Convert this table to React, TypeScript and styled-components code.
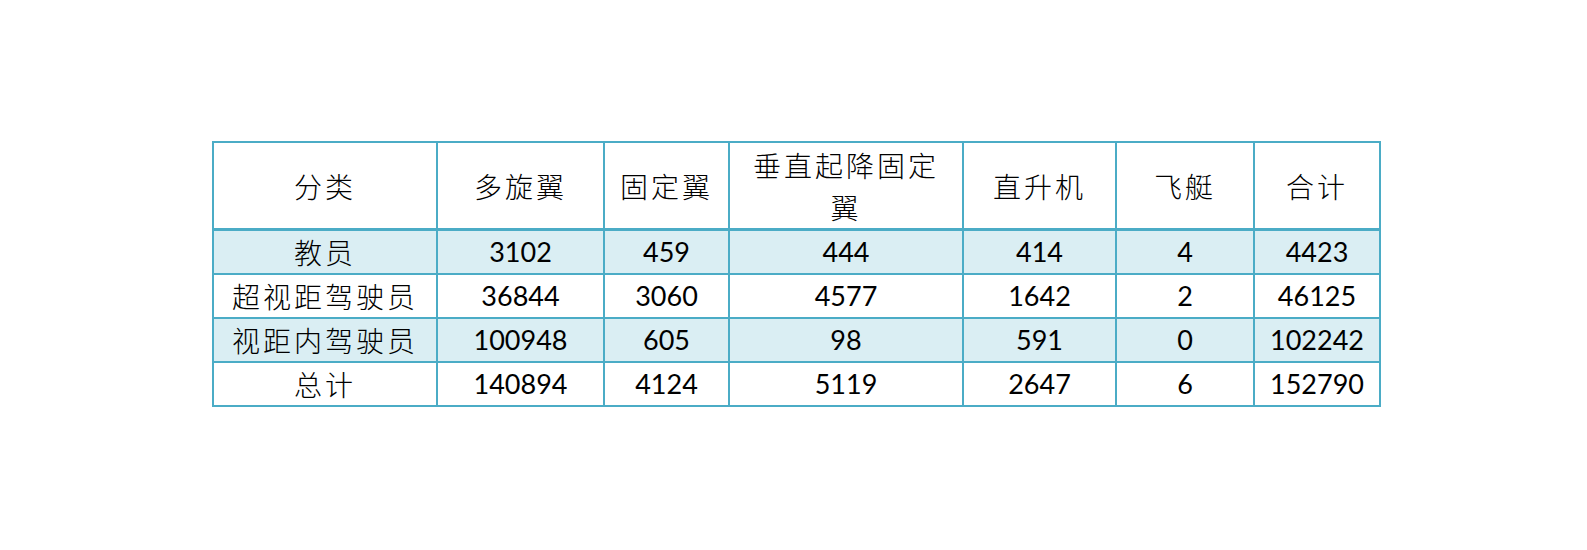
import styled, { createGlobalStyle } from "styled-components";

const GlobalStyle = createGlobalStyle`
  html, body {
    margin: 0;
    padding: 0;
    background: #fff;
  }
`;

const accent = "#4bacc6";
const fill = "#daeef3";

const Page = styled.div`
  width: 1587px;
  height: 550px;
  box-sizing: border-box;
  padding: 141px 0 0 212px;
  background: #fff;
`;

const Table = styled.table`
  border-collapse: collapse;
  table-layout: fixed;
  width: 1169px;
  font-family: Lato, "Noto Sans CJK SC", sans-serif;
  color: #000;
`;

const HeadCell = styled.th`
  height: 85px;
  padding: 0 14px;
  border: 2px solid ${accent};
  border-bottom-width: 3px;
  font-family: "Noto Sans CJK SC", sans-serif;
  font-weight: 300;
  font-size: 28px;
  line-height: 42px;
  letter-spacing: 3px;
  text-align: center;
  vertical-align: middle;
`;

const Row = styled.tr<{ $shaded: boolean }>`
  background: ${(p) => (p.$shaded ? fill : "#fff")};
`;

const LabelCell = styled.td`
  height: 42px;
  padding: 0;
  border: 2px solid ${accent};
  font-family: "Noto Sans CJK SC", sans-serif;
  font-weight: 300;
  font-size: 28px;
  letter-spacing: 3px;
  line-height: 42px;
  text-align: center;
`;

const NumCell = styled.td`
  height: 42px;
  padding: 0;
  border: 2px solid ${accent};
  font-size: 27px;
  line-height: 42px;
  text-align: center;
`;

const widths = [224, 167, 125, 234, 153, 138, 126];

const headers = ["分类", "多旋翼", "固定翼", "垂直起降固定翼", "直升机", "飞艇", "合计"];

const rows: [string, number[]][] = [
  ["教员", [3102, 459, 444, 414, 4, 4423]],
  ["超视距驾驶员", [36844, 3060, 4577, 1642, 2, 46125]],
  ["视距内驾驶员", [100948, 605, 98, 591, 0, 102242]],
  ["总计", [140894, 4124, 5119, 2647, 6, 152790]],
];

export default function App() {
  return (
    <>
      <GlobalStyle />
      <Page>
        <Table>
          <colgroup>
            {widths.map((w, i) => (
              <col key={i} style={{ width: w }} />
            ))}
          </colgroup>
          <thead>
            <tr>
              {headers.map((h) => (
                <HeadCell key={h}>{h}</HeadCell>
              ))}
            </tr>
          </thead>
          <tbody>
            {rows.map(([label, nums], i) => (
              <Row key={label} $shaded={i % 2 === 0}>
                <LabelCell>{label}</LabelCell>
                {nums.map((n, j) => (
                  <NumCell key={j}>{n}</NumCell>
                ))}
              </Row>
            ))}
          </tbody>
        </Table>
      </Page>
    </>
  );
}
